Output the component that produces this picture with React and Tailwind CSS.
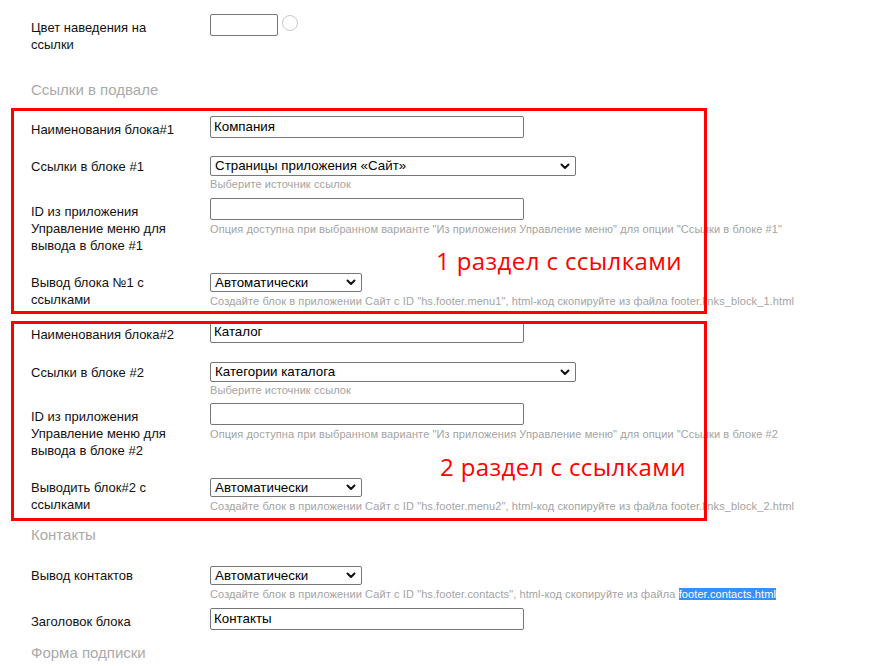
import React from 'react';

const Chevron = () => (
  <svg width="10" height="7" viewBox="0 0 10 7" className="shrink-0">
    <path d="M1.5 1.5 L5 5 L8.5 1.5" fill="none" stroke="#111" strokeWidth="2" strokeLinecap="round" strokeLinejoin="round" />
  </svg>
);

const TextInput = ({ value, className = 'w-[314px]' }) => (
  <div className={`${className} h-[22px] border border-[#767676] rounded-[2px] bg-white pl-[3px] text-[13.33px] leading-[20px] text-black`}>
    {value}
  </div>
);

const Select = ({ value, className }) => (
  <div className={`${className} flex items-center justify-between border border-[#767676] rounded-[2px] bg-white pl-[4px] pr-[5px] text-[13.33px] text-black`}>
    <span className="leading-[16px]">{value}</span>
    <Chevron />
  </div>
);

const Hint = ({ children, className = 'mt-[1px]' }) => (
  <div className={`${className} text-[11px] leading-[14px] tracking-[0.1px] text-[#a3a3a3] whitespace-nowrap`}>{children}</div>
);

const Row = ({ label, className, labelPad, children }) => (
  <div className={`flex ${className}`}>
    <div className={`w-[179px] shrink-0 text-[13px] leading-[17px] text-[#111] ${labelPad}`}>{label}</div>
    <div>{children}</div>
  </div>
);

const Header = ({ children, className }) => (
  <div className={`${className} text-[15px] leading-[20px] text-[#aaaaaa]`}>{children}</div>
);

export default function App() {
  return (
    <div className="relative w-[878px] h-[666px] overflow-hidden bg-white font-['Liberation_Sans',Arial,sans-serif]">
      <div className="pl-[31px] pt-[14px]">
        <Row label={<>Цвет наведения на<br />ссылки</>} className="h-[66px]" labelPad="pt-[5px]">
          <div className="flex items-start gap-[4px]">
            <div className="w-[68px] h-[22px] border border-[#767676] rounded-[2px]" />
            <div className="mt-[1px] w-[16px] h-[16px] rounded-full border border-[#c8c8c8]" />
          </div>
        </Row>
        <Header className="h-[36px]">Ссылки в подвале</Header>

        <Row label="Наименования блока#1" className="h-[40px]" labelPad="pt-[5px]">
          <TextInput value="Компания" />
        </Row>
        <Row label="Ссылки в блоке #1" className="h-[42px]" labelPad="pt-[2px]">
          <Select value="Страницы приложения «Сайт»" className="w-[366px] h-[20px]" />
          <Hint>Выберите источник ссылок</Hint>
        </Row>
        <Row label={<>ID из приложения<br />Управление меню для<br />вывода в блоке #1</>} className="h-[75px]" labelPad="pt-[5px]">
          <TextInput value="" />
          <Hint className="mt-[2px]">Опция доступна при выбранном варианте "Из приложения Управление меню" для опции "Ссылки в блоке #1"</Hint>
        </Row>
        <Row label={<>Вывод блока №1 с<br />ссылками</>} className="h-[48px]" labelPad="pt-[1px]">
          <Select value="Автоматически" className="w-[152px] h-[19px]" />
          <Hint className="mt-[2px]">Создайте блок в приложении Сайт с ID "hs.footer.menu1", html-код скопируйте из файла footer.links_block_1.html</Hint>
        </Row>

        <Row label="Наименования блока#2" className="h-[41px]" labelPad="pt-[5px]">
          <TextInput value="Каталог" />
        </Row>
        <Row label="Ссылки в блоке #2" className="h-[41px]" labelPad="pt-[2px]">
          <Select value="Категории каталога" className="w-[366px] h-[20px]" />
          <Hint>Выберите источник ссылок</Hint>
        </Row>
        <Row label={<>ID из приложения<br />Управление меню для<br />вывода в блоке #2</>} className="h-[75px]" labelPad="pt-[5px]">
          <TextInput value="" />
          <Hint className="mt-[2px]">Опция доступна при выбранном варианте "Из приложения Управление меню" для опции "Ссылки в блоке #2</Hint>
        </Row>
        <Row label={<>Выводить блок#2 с<br />ссылками</>} className="h-[47px]" labelPad="pt-[1px]">
          <Select value="Автоматически" className="w-[152px] h-[19px]" />
          <Hint className="mt-[2px]">Создайте блок в приложении Сайт с ID "hs.footer.menu2", html-код скопируйте из файла footer.links_block_2.html</Hint>
        </Row>

        <Header className="h-[41px]">Контакты</Header>
        <Row label="Вывод контактов" className="h-[42px]" labelPad="pt-[1px]">
          <Select value="Автоматически" className="w-[152px] h-[19px]" />
          <Hint className="mt-[2px]">
            Создайте блок в приложении Сайт с ID "hs.footer.contacts", html-код скопируйте из файла{' '}
            <span className="bg-[#3390ff] text-white">footer.contacts.html</span>
          </Hint>
        </Row>
        <Row label="Заголовок блока" className="h-[35px]" labelPad="pt-[5px]">
          <TextInput value="Контакты" />
        </Row>
        <Header className="h-[20px]">Форма подписки</Header>
      </div>

      {/* annotations drawn over the form */}
      <div className="absolute left-[11px] top-[108px] w-[696px] h-[206px] border-[3px] border-[#ff0000] pointer-events-none" />
      <div className="absolute left-[11px] top-[321px] w-[696px] h-[200px] border-[3px] border-[#ff0000] pointer-events-none" />
      <div className="absolute left-[436px] top-[244px] text-[24px] leading-[34px] tracking-[0.4px] text-[#ff0000] font-['Open_Sans',sans-serif]">1 раздел с ссылками</div>
      <div className="absolute left-[440px] top-[450px] text-[24px] leading-[34px] tracking-[0.4px] text-[#ff0000] font-['Open_Sans',sans-serif]">2 раздел с ссылками</div>
    </div>
  );
}
